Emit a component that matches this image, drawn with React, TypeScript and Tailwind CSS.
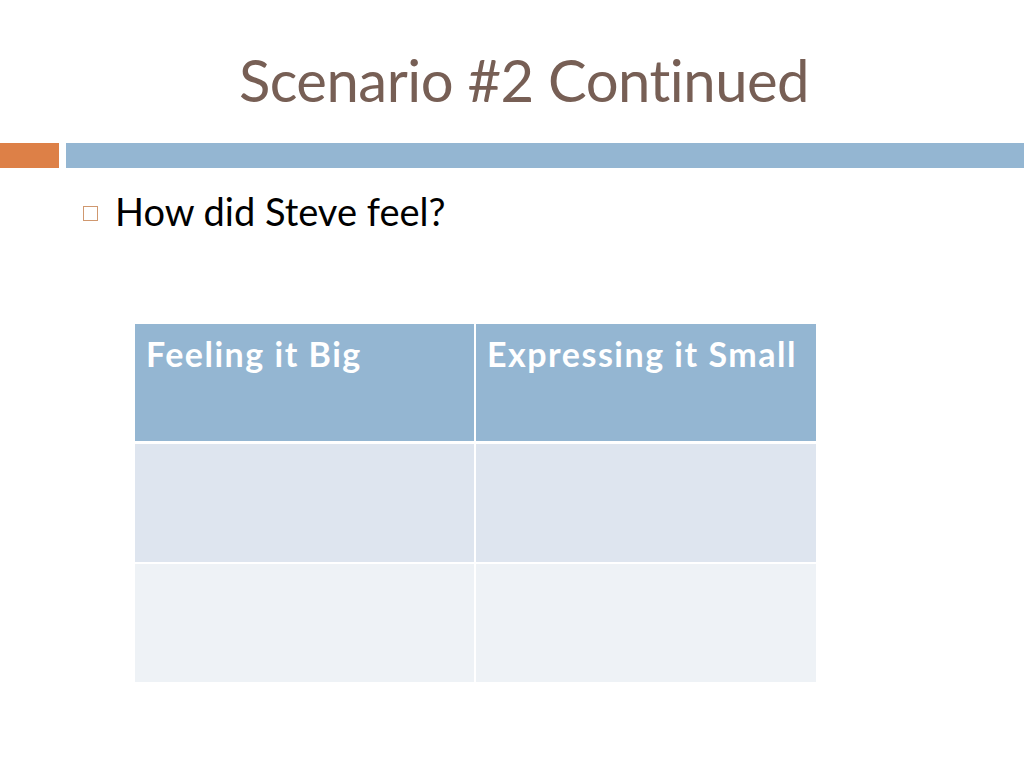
import React from 'react'

const font = { fontFamily: '"Lato", "Open Sans", sans-serif' }

const Row = ({ bg, h }: { bg: string; h: string }) => (
  <div className={`flex ${h}`}>
    <div className={`w-[339px] ${bg}`}></div>
    <div className="w-[2px] bg-white"></div>
    <div className={`flex-1 ${bg}`}></div>
  </div>
)

const App = () => {
  return (
    <div className="w-[1024px] h-[768px] bg-white overflow-hidden" style={font}>
      <div className="h-[143px] flex justify-center pl-[24px] pt-[48px]">
        <h1 className="text-[58px] leading-[64px] text-[#775f55] tracking-[-0.5px]">Scenario #2 Continued</h1>
      </div>
      <div className="flex h-[25px] gap-[7px]">
        <div className="w-[59px] bg-[#dd8047]"></div>
        <div className="flex-1 bg-[#94b6d2]"></div>
      </div>
      <div className="flex items-center pl-[83px] pt-[20px]">
        <div className="w-[15px] h-[15px] mt-[4px] border-[1.5px] border-[#d0986f]"></div>
        <span className="ml-[17px] text-[38px] leading-[46px] text-black">How did Steve feel?</span>
      </div>
      <div className="ml-[135px] mt-[90px] w-[681px] flex flex-col">
        <div className="flex h-[117px]">
          <div className="w-[339px] bg-[#94b6d2] px-[11px] pt-[10px]">
            <span className="text-[34px] font-bold text-white leading-[40px] tracking-[1.5px]">Feeling it Big</span>
          </div>
          <div className="w-[2px] bg-white"></div>
          <div className="flex-1 bg-[#94b6d2] px-[11px] pt-[10px]">
            <span className="text-[34px] font-bold text-white leading-[40px] tracking-[1.5px]">Expressing it Small</span>
          </div>
        </div>
        <div className="h-[3px] bg-white"></div>
        <Row bg="bg-[#dee5ef]" h="h-[118px]" />
        <div className="h-[2px] bg-white"></div>
        <Row bg="bg-[#eef2f6]" h="h-[118px]" />
      </div>
    </div>
  )
}

export default App
